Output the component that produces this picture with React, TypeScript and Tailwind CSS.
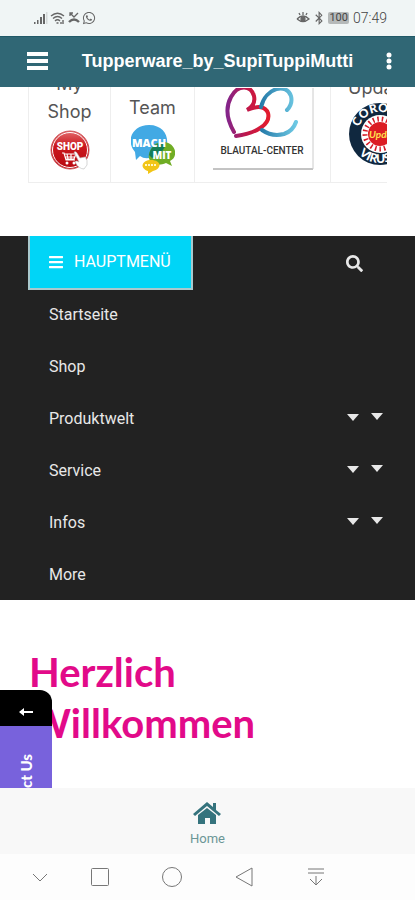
import { FaBars, FaSearch, FaWhatsapp, FaBluetoothB } from "react-icons/fa";

const menuItems = [
  { label: "Startseite", hasChildren: false },
  { label: "Shop", hasChildren: false },
  { label: "Produktwelt", hasChildren: true },
  { label: "Service", hasChildren: true },
  { label: "Infos", hasChildren: true },
  { label: "More", hasChildren: false },
];

function StatusBar() {
  return (
    <div className="flex h-9 shrink-0 items-center justify-between bg-[#f0f5f5] pr-7 pl-8 text-[#666]">
      <div className="flex items-center gap-0.5">
        {/* Signal */}
        <svg className="h-3 w-4" viewBox="0 0 16 12" fill="currentColor">
          <path d="M2 10h1.5v2H2zM5 8h1.5v4H5zM8 5h2v7H8zM11 2h2v10h-2z" />
          <path d="M14 0h1.5v12H14z" opacity=".2" />
        </svg>
        {/* Wifi */}
        <svg className="h-3 w-4" viewBox="0 0 16 12" fill="none" stroke="currentColor" strokeWidth="1.4">
          <path d="M1 4Q7.5-1.5 14 4M3 6.5Q7.5 2.5 12 6.5M5 9Q7.5 6.5 10 9" />
          <path d="M6.5 11h2M13 8v4M11 10v2" />
        </svg>
        {/* Missed call */}
        <svg className="h-3 w-3" viewBox="0 0 12 12" fill="none" stroke="currentColor" strokeWidth="1.3">
          <path d="M2 1l4 4 4-4M2 4V1h3" />
          <path d="M1 10Q6 5 11 10" strokeWidth="2.4" />
        </svg>
        <FaWhatsapp className="size-3.5" />
      </div>
      <div className="flex items-center gap-0.5">
        {/* Eye comfort */}
        <svg className="h-3 w-3.5" viewBox="0 0 14 12" fill="none" stroke="currentColor" strokeWidth="1.3">
          <path d="M1 7Q7 1 13 7Q7 12 1 7M7 0v3M3 1l1 2M11 1l-1 2" />
          <circle cx="7" cy="7" r="2" fill="currentColor" />
        </svg>
        <FaBluetoothB className="size-3.5" />
        <span className="flex h-3 items-center rounded-xs bg-[#b5b9b9] px-px font-['Roboto',sans-serif] text-[11px] text-[#444]">100</span>
        <span className="ml-0.5 font-['Roboto',sans-serif] text-sm font-light text-[#444]">07:49</span>
      </div>
    </div>
  );
}

function AppBar() {
  return (
    <header className="flex h-[51px] shrink-0 items-center justify-between border-t border-[#205967] bg-[#306775] pr-5 pb-0.5 pl-[27px] text-white">
      <button type="button" aria-label="Menu">
        <svg className="h-[18px] w-[21px]" viewBox="0 0 21 18" fill="currentColor">
          <path d="M0 0h21v4H0zM0 7h21v4H0zM0 14h21v4H0z" />
        </svg>
      </button>
      <h1 className="ml-1 font-['Liberation_Sans',Arial,sans-serif] text-lg font-bold">Tupperware_by_SupiTuppiMutti</h1>
      <button type="button" aria-label="More options">
        <svg className="h-[18px] w-3" viewBox="0 0 12 18" fill="currentColor">
          <circle cx="6" cy="3" r="2.5" />
          <circle cx="6" cy="9" r="2.5" />
          <circle cx="6" cy="15" r="2.5" />
        </svg>
      </button>
    </header>
  );
}

function ShopLogo() {
  return (
    <svg className="size-10" viewBox="0 0 40 40">
      <defs>
        <linearGradient id="red" x2="0" y2="1">
          <stop stopColor="#e36b6d" />
          <stop offset=".4" stopColor="#ca171d" />
          <stop offset="1" stopColor="#b80911" />
        </linearGradient>
      </defs>
      <circle cx="20" cy="20" r="19" fill="url(#red)" stroke="#cf5559" />
      <circle cx="20" cy="20" r="17.5" fill="none" stroke="#fff" strokeWidth="1" />
      <text x="20" y="20" textAnchor="middle" fontFamily="Roboto" fontWeight="900" fontSize="10" fill="#fff">SHOP</text>
      <path d="M12 23h2l2 7h9M14 24h12l-2 5h-8M17 24l1 5M21 24v5M15 27h10" fill="none" stroke="#fff" strokeWidth="1.2" />
      <circle cx="17" cy="33" r="1.5" fill="#fff" />
      <circle cx="24" cy="33" r="1.5" fill="#fff" />
      <path d="M24 22q2-1 3 1l3 5 5-1q3 3 2 8l-3 4q-5 0-9-7 1-2 4 0z" fill="#fff" stroke="#bbb" strokeWidth=".6" />
    </svg>
  );
}

function TeamLogo() {
  return (
    <svg className="h-[50px] w-11" viewBox="0 0 44 50">
      <path d="M18 1C41 1 42 30 22 33Q14 36 9 32L5 36 4 28C-6 16 2 1 18 1z" fill="#42a9e4" />
      <path d="M32 18C45 18 48 33 39 37l2 5-6-3C24 44 16 37 18 30q3-12 14-12z" fill="#70ad25" />
      <path d="M18 31Q20 19 35 18 34 29 21 34z" fill="#147d58" />
      <path d="M20 36c11 0 11 9 2 11l-5 3v-3c-9-3-6-11 3-11z" fill="#f2c516" />
      <text x="18" y="23" textAnchor="middle" fontFamily="Open Sans" fontWeight="800" fontSize="11" fill="#fff">MACH</text>
      <text x="31" y="35" textAnchor="middle" fontFamily="Open Sans" fontWeight="800" fontSize="10" fill="#fff">MIT</text>
      <path d="M14 41h12" stroke="#fff7c5" strokeWidth="2" strokeDasharray="2 1" />
    </svg>
  );
}

function BlautalLogo() {
  return (
    <svg className="h-[82px] w-[102px]" viewBox="0 0 102 82">
      <defs>
        <linearGradient id="heart" x1="0" x2="1">
          <stop stopColor="#84258a" />
          <stop offset=".45" stopColor="#be174b" />
          <stop offset="1" stopColor="#e31c2d" />
        </linearGradient>
        <linearGradient id="wave" x1="0" x2="1">
          <stop stopColor="#267ba9" />
          <stop offset="1" stopColor="#6ec9e4" />
        </linearGradient>
      </defs>
      <path d="M22 44C15 32 13 20 19 9C26-4 39-3 42 8Q44 17 35 22Q52 15 56 25C59 36 45 45 24 48" fill="none" stroke="url(#heart)" strokeWidth="4" strokeLinecap="round" />
      <path d="M49 19C54-1 75-5 79 8Q81 16 75 22M50 42Q60 49 72 46Q81 43 84 34" fill="none" stroke="url(#wave)" strokeWidth="4" strokeLinecap="round" />
      <text x="50" y="66" textAnchor="middle" fontFamily="Roboto" fontWeight="500" fontSize="10" fill="#333">BLAUTAL-CENTER</text>
      <path d="M1 81h100" fill="none" stroke="#888" />
      <path d="M101 81V0" fill="none" stroke="#ccc" />
    </svg>
  );
}

function CoronaLogo() {
  return (
    <svg className="h-16 w-[39px]" viewBox="0 0 39 64">
      <defs>
        <path id="ringTop" d="M10 32a22 22 0 0 1 44 0" />
        <path id="ringBottom" d="M3 32a29 29 0 0 0 58 0" />
      </defs>
      <circle cx="32" cy="32" r="31" fill="#10283f" />
      <circle cx="32" cy="32" r="19" fill="#fff" />
      <circle cx="32" cy="32" r="15" fill="none" stroke="#d51925" strokeWidth="5" strokeDasharray="1.5 3" />
      <circle cx="32" cy="32" r="12" fill="#dc1c23" />
      <text fontFamily="Lato" fontWeight="900" fontSize="12" fill="#fff">
        <textPath href="#ringTop" startOffset="7">CORONA</textPath>
      </text>
      <text fontFamily="Lato" fontWeight="900" fontSize="12" fill="#fff">
        <textPath href="#ringBottom" startOffset="22">VIRUS</textPath>
      </text>
      <text x="21" y="36" fontFamily="Lato" fontStyle="italic" fontWeight="700" fontSize="10" fill="#ffe34d">Update</text>
    </svg>
  );
}

function LinkTable() {
  return (
    <div className="mx-7 h-24 shrink-0 overflow-hidden">
      <div className="flex h-full w-max items-end border-b border-l border-[#eee] font-['Inter',sans-serif] text-lg leading-6 text-[#555]">
        <a href="#my-shop" className="flex h-32 w-[82px] flex-col items-center justify-end border-r border-[#eee] pb-3">
          <span className="mb-1">My</span>
          <span className="mb-1.5">Shop</span>
          <ShopLogo />
        </a>
        <a href="#team" className="flex h-32 w-[84px] flex-col items-center justify-end border-r border-[#eee] pb-2">
          <span className="mb-1">Team</span>
          <TeamLogo />
        </a>
        <a href="#blautal" aria-label="Blautal-Center" className="flex h-32 w-[136px] items-end justify-center border-r border-[#eee] pb-3">
          <BlautalLogo />
        </a>
        <a href="#updates" className="flex h-32 w-24 flex-col items-start justify-end pb-4 pl-[17px]">
          <span className="mb-0.5">Updates</span>
          <CoronaLogo />
        </a>
      </div>
    </div>
  );
}

function Caret() {
  return (
    <svg className="h-[7px] w-3" viewBox="0 0 12 7" fill="currentColor">
      <path d="M0 0h12L6 7z" />
    </svg>
  );
}

function MainMenu() {
  return (
    <nav className="mt-[53px] h-[364px] shrink-0 bg-[#222] px-7 font-['Roboto',sans-serif] text-base text-[#e8e8e8]">
      <div className="flex items-center justify-between pr-6">
        <button type="button" className="flex h-[54px] w-[165px] items-center gap-2.5 border-2 border-t-0 border-[#a9c9cd] bg-[#00d5f7] pl-[18px] text-white">
          <FaBars className="size-4" />
          HAUPTMENÜ
        </button>
        <button type="button" aria-label="Suche">
          <FaSearch className="size-[17px]" />
        </button>
      </div>
      <ul className="-mt-px">
        {menuItems.map((item) => (
          <li key={item.label} className="flex h-[52px] items-center justify-between pl-[21px]">
            <a href={`#${item.label}`}>{item.label}</a>
            {item.hasChildren && (
              <button type="button" aria-label={`${item.label} öffnen`} className="mr-1 flex items-start gap-3 pb-1">
                <span className="flex pt-px"><Caret /></span>
                <Caret />
              </button>
            )}
          </li>
        ))}
      </ul>
    </nav>
  );
}

function Welcome() {
  return (
    <main className="relative min-h-[188px] grow overflow-hidden bg-white px-[29px] pt-[47px]">
      <h2 className="font-['Lato',sans-serif] text-[40px] leading-[51px] font-bold text-[#e20a89]">
        Herzlich
        <br />
        Willkommen
      </h2>
      {/* Contact tab sticking to the left edge */}
      <div className="absolute top-[90px] left-0 w-[52px] overflow-hidden rounded-tr-xl text-white">
        <button type="button" aria-label="Einklappen" className="flex h-9 w-full items-center justify-center bg-black pt-2">
          <svg className="h-2 w-3.5" viewBox="0 0 14 8" fill="currentColor">
            <path d="M14 3v2H5v3L0 4l5-4v3z" />
          </svg>
        </button>
        <button type="button" className="flex h-32 w-full items-start justify-center bg-[#7862dc] pt-7 font-['Lato',sans-serif] text-[15px] font-black">
          <span className="rotate-180 [writing-mode:vertical-rl]">Contact Us</span>
        </button>
      </div>
    </main>
  );
}

function TabBar() {
  return (
    <div className="flex h-[66px] shrink-0 justify-center bg-[#f8f8f8] pt-[13px]">
      <a href="#home" className="flex flex-col items-center gap-1 font-['Roboto',sans-serif] text-[13px] leading-5 text-[#6b9696]">
        <svg className="h-6 w-7" viewBox="0 0 28 24" fill="#35737d">
          <path d="M14 1l6 5V2h3v7l5 4-2 2L14 5 2 15l-2-2z" />
          <path d="M14 7l9 7v9h-6v-6h-5v6H5v-9z" />
        </svg>
        Home
      </a>
    </div>
  );
}

function SystemNav() {
  return (
    <div className="flex h-[46px] shrink-0 items-center gap-9 bg-[#fdfdfd] pr-[87px] pl-7 text-[#777] [&_svg]:size-6 [&_svg]:fill-none [&_svg]:stroke-current">
      <button type="button" aria-label="Hide"><svg viewBox="0 0 24 24"><path d="M5 9l7 7 7-7" /></svg></button>
      <div className="flex grow items-center justify-between">
        <button type="button" aria-label="Recent"><svg viewBox="0 0 24 24"><rect x="3.5" y="3.5" width="17" height="17" rx="1" /></svg></button>
        <button type="button" aria-label="Home"><svg viewBox="0 0 24 24"><circle cx="12" cy="12" r="9.5" /></svg></button>
        <button type="button" aria-label="Back"><svg viewBox="0 0 24 24"><path d="M20 3v18L4 12z" /></svg></button>
        <button type="button" aria-label="Notifications"><svg viewBox="0 0 24 24"><path d="M4 4h16M4 8h16M12 11v9M6 14l6 6 6-6" /></svg></button>
      </div>
    </div>
  );
}

export default function App() {
  return (
    <div className="flex min-h-screen flex-col overflow-hidden bg-white">
      <StatusBar />
      <AppBar />
      <LinkTable />
      <MainMenu />
      <Welcome />
      <TabBar />
      <SystemNav />
    </div>
  );
}
